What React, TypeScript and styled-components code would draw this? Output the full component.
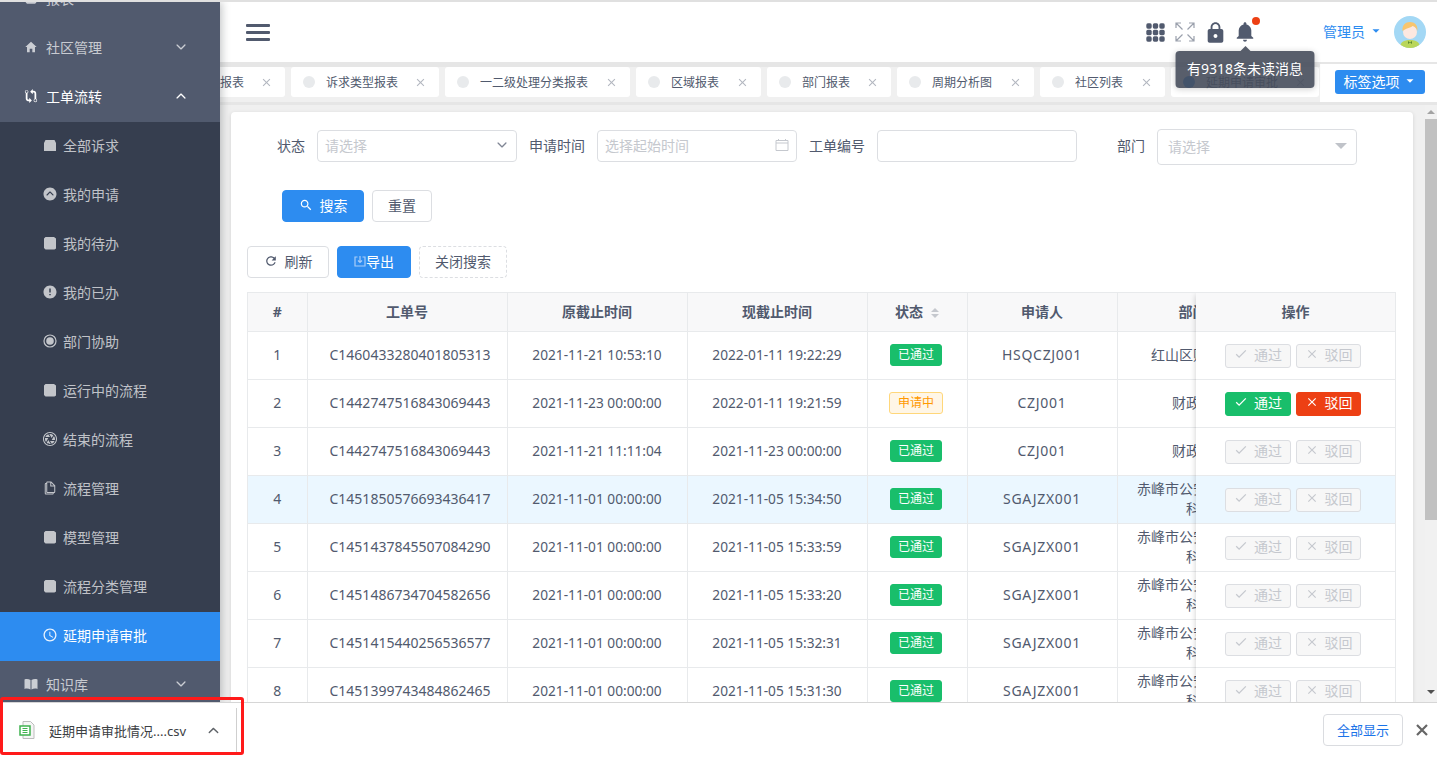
import styled, { createGlobalStyle } from 'styled-components';
import {
  IoMdHome, IoMdGitCompare, IoMdAlert, IoMdAperture, IoMdTime, IoMdCopy,
  IoMdLock, IoMdNotifications, IoMdCheckmark, IoMdClose, IoMdRefresh, IoMdSearch, IoMdArrowDropdown,
  IoIosArrowDown, IoIosArrowUp, IoIosArrowDropupCircle,
} from 'react-icons/io';
import type { ReactNode } from 'react';

const GlobalStyle = createGlobalStyle`
  * { box-sizing: border-box; }
  html, body { margin: 0; height: 100%; overflow: hidden; }
  body {
    font-family: "Noto Sans", "Noto Sans CJK SC", "Liberation Sans", sans-serif;
    font-size: 14px;
    color: #515a6e;
  }
`;

const Page = styled.div`
  position: relative;
  display: flex;
  flex-direction: column;
  width: 1437px;
  height: 757px;
  border-top: 2px solid #e0e0e0;
  overflow: hidden;
`;

const Main = styled.div`
  flex: 1;
  min-height: 0;
  display: flex;
`;

/* sidebar */
const Sidebar = styled.aside`
  width: 220px;
  flex-shrink: 0;
  background: #515a6e;
  overflow: hidden;
  z-index: 2;
  box-shadow: 2px 0 8px rgba(29, 35, 41, 0.25);
`;

const MenuList = styled.div`
  margin-top: -27px;
`;

const MenuItem = styled.div<{ $open?: boolean }>`
  height: 49px;
  display: flex;
  align-items: center;
  padding: 0 32px 3px 24px;
  gap: 8px;
  color: ${p => (p.$open ? '#fff' : 'rgba(255, 255, 255, 0.7)')};
  svg:first-child { width: 14px; height: 14px; flex-shrink: 0; }
  span { flex: 1; }
  svg:last-child { font-size: 14px; }
`;

const SubList = styled.div`
  background: #363e4f;
`;

const SubItem = styled.div<{ $active?: boolean }>`
  height: 49px;
  display: flex;
  align-items: center;
  padding: 0 0 3px 42px;
  gap: 5px;
  color: ${p => (p.$active ? '#fff' : 'rgba(255, 255, 255, 0.7)')};
  background: ${p => (p.$active ? '#2d8cf0' : 'transparent')};
  svg { width: 16px; height: 16px; flex-shrink: 0; }
`;

/* right side */
const Content = styled.div`
  flex: 1;
  min-width: 0;
  display: flex;
  flex-direction: column;
  background: #f0f0f0;
`;

const Header = styled.header`
  height: 60px;
  flex-shrink: 0;
  background: #fff;
  display: flex;
  align-items: center;
  padding: 0 11px 0 26px;
  position: relative;
  z-index: 1;
`;

const Burger = styled.div`
  width: 24px;
  height: 17px;
  display: flex;
  flex-direction: column;
  justify-content: space-between;
  i {
    display: block;
    height: 3px;
    border-radius: 1px;
    background: #515a6e;
  }
`;

const HeaderTools = styled.div`
  margin-left: auto;
  display: flex;
  align-items: center;
`;

const ToolIcon = styled.div`
  position: relative;
  width: 30px;
  height: 24px;
  display: flex;
  align-items: center;
  justify-content: center;
  color: #515a6e;
`;

const Dot = styled.i`
  position: absolute;
  top: -3px;
  right: 0;
  width: 8px;
  height: 8px;
  border-radius: 50%;
  background: #ed4014;
`;

const Tooltip = styled.div`
  position: absolute;
  top: 31px;
  left: 50%;
  transform: translateX(-50%);
  width: 139px;
  height: 37px;
  line-height: 35px;
  text-align: center;
  background: rgba(70, 76, 91, 0.9);
  color: #fff;
  font-size: 14px;
  border-radius: 4px;
  white-space: nowrap;
  z-index: 5;
  box-shadow: 0 1px 6px rgba(0, 0, 0, 0.2);
  &::before {
    content: '';
    position: absolute;
    top: -5px;
    left: 50%;
    margin-left: -5px;
    border: 5px solid transparent;
    border-top: 0;
    border-bottom-color: rgba(70, 76, 91, 0.9);
  }
`;

const UserName = styled.div`
  margin-left: 63px;
  padding-bottom: 2px;
  color: #2d8cf0;
  display: flex;
  align-items: center;
  gap: 4px;
  font-size: 14px;
  svg { font-size: 14px; }
`;

const Avatar = styled.div`
  margin-left: 11px;
  width: 32px;
  height: 32px;
  svg { display: block; }
`;

const TabsBar = styled.div`
  height: 43px;
  flex-shrink: 0;
  display: flex;
  background: #e6e6e6;
  padding-bottom: 3px;
`;

const TabsTrack = styled.div`
  flex: 1;
  min-width: 0;
  margin-top: 5px;
  background: #f0f0f0;
  display: flex;
  overflow: hidden;
`;

const Tab = styled.div<{ $w: number; $current?: boolean }>`
  width: ${p => p.$w}px;
  flex-shrink: 0;
  height: 30px;
  margin-right: 6px;
  background: #fff;
  border-radius: 3px;
  display: flex;
  align-items: center;
  padding: 0 12px;
  font-size: 12px;
  color: #515a6e;
  white-space: nowrap;
  overflow: hidden;
  b {
    width: 12px;
    height: 12px;
    border-radius: 50%;
    background: ${p => (p.$current ? '#2d8cf0' : '#e8eaec')};
    margin-right: 11px;
    flex-shrink: 0;
  }
  span { flex: 1; }
  svg { flex-shrink: 0; font-size: 13px; color: #b3b7c0; }
`;

const FirstTab = styled(Tab)`
  padding: 0 12px 0 0;
  border-radius: 0 3px 3px 0;
`;

const TabsOption = styled.div`
  width: 117px;
  flex-shrink: 0;
  margin-top: 2px;
  background: #fff;
  display: flex;
  align-items: flex-start;
  justify-content: flex-end;
  padding: 6px 12px 0 0;
`;

const OptionButton = styled.div`
  width: 90px;
  height: 24px;
  padding-bottom: 2px;
  border-radius: 3px;
  background: #2d8cf0;
  color: #fff;
  display: flex;
  align-items: center;
  justify-content: center;
  gap: 3px;
`;

const Body = styled.div`
  flex: 1;
  min-height: 0;
  display: flex;
  padding-left: 11px;
`;

const Card = styled.section`
  flex: 1;
  min-width: 0;
  margin-top: 7px;
  background: #fff;
  border-radius: 4px 4px 0 0;
  padding: 16px 17px 0 16px;
  overflow: hidden;
  box-shadow: 0 1px 4px rgba(0, 0, 0, 0.12);
`;

const Scrollbar = styled.div`
  width: 12px;
  flex-shrink: 0;
  margin-left: 12px;
  padding-bottom: 3px;
  background: #f1f1f1;
  display: flex;
  flex-direction: column;
`;

const ScrollArrow = styled.i<{ $up?: boolean }>`
  height: 14px;
  flex-shrink: 0;
  display: flex;
  align-items: center;
  justify-content: center;
  margin-top: ${p => (p.$up ? '0' : 'auto')};
  &::after {
    content: '';
    border: 4px solid transparent;
    ${p => (p.$up ? 'border-top: 0; border-bottom: 4px solid #a3a3a3;' : 'border-bottom: 0; border-top: 4px solid #505050;')}
  }
`;

const ScrollThumb = styled.div`
  height: 401px;
  background: #c1c1c1;
`;

const FilterRow = styled.div`
  display: flex;
  align-items: center;
  height: 36px;
`;

const Label = styled.label<{ $w: number }>`
  width: ${p => p.$w}px;
  padding: 0 12px 2px 0;
  text-align: right;
  font-size: 14px;
  flex-shrink: 0;
  white-space: nowrap;
`;

const Field = styled.div`
  width: 200px;
  height: 32px;
  border: 1px solid #dcdee2;
  border-radius: 4px;
  display: flex;
  align-items: center;
  justify-content: space-between;
  padding: 0 7px 2px 7px;
  flex-shrink: 0;
  color: #c5c8ce;
  svg { color: #808695; font-size: 14px; }
`;

const TallField = styled(Field)`
  height: 36px;
  margin-top: 2px;
  padding: 0 3px 2px 10px;
  svg { color: #c0c3c9; font-size: 24px; }
`;

const ButtonRow = styled.div<{ $top: number; $left: number }>`
  display: flex;
  gap: 8px;
  margin-top: ${p => p.$top}px;
  padding-left: ${p => p.$left}px;
`;

const Button = styled.div<{ $w: number; $primary?: boolean; $dashed?: boolean }>`
  width: ${p => p.$w}px;
  height: 32px;
  padding-bottom: 3px;
  border-radius: 4px;
  display: flex;
  align-items: center;
  justify-content: center;
  gap: 7px;
  font-size: 14px;
  background: ${p => (p.$primary ? '#2d8cf0' : '#fff')};
  color: ${p => (p.$primary ? '#fff' : '#515a6e')};
  border: 1px ${p => (p.$dashed ? 'dashed' : 'solid')} ${p => (p.$primary ? '#2d8cf0' : '#dcdee2')};
`;

const ExportGlyph = styled.svg`
  margin-right: -7px;
`;

const TableWrap = styled.div`
  position: relative;
  width: 1149px;
  margin-top: 14px;
  border: 1px solid #e8eaec;
  border-bottom: 0;
  overflow: hidden;
`;

const Table = styled.table`
  width: 1147px;
  border-collapse: collapse;
  table-layout: fixed;
  text-align: center;
  color: #515a6e;
  th, td {
    padding: 0 16px;
    border-bottom: 1px solid #e8eaec;
    border-right: 1px solid #e8eaec;
    font-size: 14px;
    line-height: 20px;
  }
  th {
    height: 38px;
    background: #f8f8f9;
    font-weight: 700;
    white-space: nowrap;
  }
  td { height: 48px; }
`;

const Row = styled.tr<{ $hover?: boolean }>`
  background: ${p => (p.$hover ? '#ebf7ff' : '#fff')};
`;

const OrderNo = styled.td`
  && { padding: 0 0 0 6px; }
  white-space: nowrap;
`;

const DateCell = styled.td`
  && { padding: 0; font-size: 13.7px; }
  white-space: nowrap;
`;

const Applicant = styled.td`
  && { padding: 0; }
  white-space: nowrap;
  letter-spacing: 0.7px;
`;

const Dept = styled.td`
  && { padding: 0 140px 0 14px; }
  word-break: break-all;
`;

const DeptHead = styled.th`
  && { padding: 0 127px 0 0; }
`;

const SortMark = styled.span`
  display: inline-flex;
  flex-direction: column;
  gap: 2px;
  margin-left: 8px;
  vertical-align: middle;
  i { display: block; border: 4px solid transparent; }
  i:first-child { border-top: 0; border-bottom: 4px solid #c5c8ce; }
  i:last-child { border-bottom: 0; border-top: 4px solid #c5c8ce; }
`;

const Tag = styled.span<{ $pending?: boolean }>`
  display: inline-block;
  width: ${p => (p.$pending ? 54 : 52)}px;
  height: 22px;
  line-height: 20px;
  margin-left: -2px;
  font-size: 12px;
  border-radius: 3px;
  vertical-align: middle;
  background: ${p => (p.$pending ? '#fff6e6' : '#19be6b')};
  border: 1px solid ${p => (p.$pending ? '#ffd77a' : '#19be6b')};
  color: ${p => (p.$pending ? '#ff9900' : '#fff')};
`;

const FixedCol = styled.div`
  position: absolute;
  top: 0;
  right: 0;
  width: 199px;
  background: #fff;
  box-shadow: -2px 0 6px -2px rgba(0, 0, 0, 0.2);
  z-index: 1;
`;

const FixedHead = styled.div`
  height: 39px;
  padding-bottom: 2px;
  background: #f8f8f9;
  border-bottom: 1px solid #e8eaec;
  display: flex;
  align-items: center;
  justify-content: center;
  font-weight: 700;
`;

const FixedCell = styled.div<{ $hover?: boolean }>`
  height: 48px;
  border-bottom: 1px solid #e8eaec;
  background: ${p => (p.$hover ? '#ebf7ff' : '#fff')};
  display: flex;
  align-items: center;
  gap: 5px;
  padding-left: 29px;
`;

const ActionBtn = styled.div<{ $w: number; $tone: 'ok' | 'no' | 'off' }>`
  width: ${p => p.$w}px;
  height: 24px;
  padding-bottom: 3px;
  border-radius: 3px;
  display: flex;
  align-items: center;
  justify-content: center;
  gap: 6px;
  font-size: 14px;
  background: ${p => (p.$tone === 'ok' ? '#19be6b' : p.$tone === 'no' ? '#ed4014' : '#f7f7f7')};
  color: ${p => (p.$tone === 'off' ? '#c5c8ce' : '#fff')};
  border: 1px solid ${p => (p.$tone === 'ok' ? '#19be6b' : p.$tone === 'no' ? '#ed4014' : '#dcdee2')};
  svg { font-size: 14px; }
`;

/* chrome download bar */
const DownloadBar = styled.footer`
  height: 55px;
  flex-shrink: 0;
  background: #fff;
  border-top: 1px solid #d6d6d6;
  display: flex;
  align-items: center;
  position: relative;
  z-index: 3;
  padding-right: 9px;
`;

const DownloadItem = styled.div`
  width: 237px;
  height: 44px;
  display: flex;
  align-items: center;
  padding-left: 19px;
  border-right: 1px solid #cfcfcf;
  font-size: 13px;
  color: #3c4043;
  span { margin-left: 14px; flex: 1; white-space: nowrap; }
  svg.up { margin-right: 15px; color: #5f6368; font-size: 15px; }
`;

const ShowAll = styled.div`
  margin-left: auto;
  width: 80px;
  height: 32px;
  padding-bottom: 2px;
  border: 1px solid #dadce0;
  border-radius: 4px;
  color: #1a73e8;
  font-size: 13px;
  display: flex;
  align-items: center;
  justify-content: center;
`;

const BarClose = styled.svg`
  margin-left: 13px;
`;

const Annotation = styled.div`
  position: absolute;
  left: 0;
  top: 695px;
  width: 244px;
  height: 58px;
  border: 3px solid #ff1a1a;
  border-radius: 3px;
  z-index: 6;
  pointer-events: none;
`;

function SquareGlyph() {
  return (
    <svg viewBox="-1 -1 16 16">
      <path d="M1 2.500 2.500 1H11l2 1.500V12.500L11.500 13.500H2.500L1 12Z" fill="currentColor" />
    </svg>
  );
}

function ArchiveGlyph() {
  return (
    <svg viewBox="-1 -1 16 16">
      <path d="M2.500 2h9L13 5v8H1V5Z" fill="currentColor" />
    </svg>
  );
}

function HelpGlyph() {
  return (
    <svg viewBox="-1 -1 16 16">
      <circle cx="7" cy="7" r="6" fill="none" stroke="currentColor" strokeWidth="1.2" />
      <circle cx="7" cy="7" r="3.800" fill="currentColor" />
    </svg>
  );
}

function BookGlyph() {
  return (
    <svg viewBox="0 0 14 14" fill="currentColor">
      <path d="M.5 2.500c2-.8 4.200-.6 6 .6v9.400c-1.800-1.100-4-1.300-6-.6ZM13.500 2.500c-2-.8-4.200-.6-6 .6v9.400c1.800-1.100 4-1.300 6-.6Z" />
    </svg>
  );
}

function CalendarGlyph() {
  return (
    <svg width="14" height="14" viewBox="0 0 14 14" fill="none" stroke="#c5c8ce">
      <path d="M1 2.500h12v10H1ZM1 5h12M3.500 1v2M10.500 1v2" />
    </svg>
  );
}

function GridIcon() {
  const cells = [3, 9.5, 16];
  return (
    <svg width="19" height="19" viewBox="0 0 19 19" fill="currentColor">
      {cells.flatMap(y => cells.map(x => <rect key={`${x}-${y}`} x={x - 2.7} y={y - 2.7} width="5.4" height="5.4" rx="1.6" />))}
    </svg>
  );
}

function ExpandIcon() {
  return (
    <svg width="20" height="20" viewBox="0 0 20 20" fill="none" stroke="#9aa0ac" strokeWidth="1.2">
      <path d="M1 6V1h5M1 1l6.500 6.500M14 1h5v5M19 1l-6.500 6.500M1 14v5h5M1 19l6.500-6.500M19 14v5h-5M19 19l-6.500-6.500" />
    </svg>
  );
}

function AvatarArt() {
  return (
    <svg width="32" height="32" viewBox="0 0 32 32">
      <defs>
        <clipPath id="avatar-clip"><circle cx="16" cy="16" r="16" /></clipPath>
      </defs>
      <g clipPath="url(#avatar-clip)">
        <rect width="32" height="32" fill="#a3d8f5" />
        <path d="M6 32c0-6 4-8 10-8s10 2 10 8Z" fill="#b9d65a" />
        <circle cx="16" cy="16" r="7" fill="#fde8e0" />
        <path d="M8.500 15c-.5-6 3-9 7.500-9s8 3 7.500 9c-1-3-3-4.500-5-5-2 2-7 2.500-10 5Z" fill="#f8c56d" />
        <path d="M14 25l2 1.500 2-1.500v3l-2-1.500-2 1.500Z" fill="#5d8a2e" />
      </g>
    </svg>
  );
}

function SheetIcon() {
  return (
    <svg width="16" height="18" viewBox="0 0 16 18">
      <path d="M4 .5h7.500L15 4v13.500H4Z" fill="#f5f5f5" stroke="#bdbdbd" />
      <rect x="1" y="5" width="10" height="9" fill="#fff" stroke="#3fb24f" strokeWidth="1.500" />
      <path d="M3.500 7.500h5M3.500 9.500h5M3.500 11.500h5" stroke="#3fb24f" />
    </svg>
  );
}

const tabs: [string, number][] = [
  ['诉求类型报表', 148],
  ['一二级处理分类报表', 185],
  ['区域报表', 125],
  ['部门报表', 124],
  ['周期分析图', 137],
  ['社区列表', 125],
];

const subMenu: [string, ReactNode][] = [
  ['全部诉求', <ArchiveGlyph key="a" />],
  ['我的申请', <IoIosArrowDropupCircle key="b" />],
  ['我的待办', <SquareGlyph key="c" />],
  ['我的已办', <IoMdAlert key="d" />],
  ['部门协助', <HelpGlyph key="e" />],
  ['运行中的流程', <SquareGlyph key="f" />],
  ['结束的流程', <IoMdAperture key="g" />],
  ['流程管理', <IoMdCopy key="h" />],
  ['模型管理', <SquareGlyph key="i" />],
  ['流程分类管理', <SquareGlyph key="j" />],
];

type OrderRow = {
  no: string;
  before: string;
  now: string;
  pending?: boolean;
  who: string;
  dept: string;
  hover?: boolean;
};

const police = '赤峰市公安局治安科';

const rows: OrderRow[] = [
  { no: 'C1460433280401805313', before: '2021-11-21 10:53:10', now: '2022-01-11 19:22:29', who: 'HSQCZJ001', dept: '红山区财政局' },
  { no: 'C1442747516843069443', before: '2021-11-23 00:00:00', now: '2022-01-11 19:21:59', pending: true, who: 'CZJ001', dept: '财政局' },
  { no: 'C1442747516843069443', before: '2021-11-21 11:11:04', now: '2021-11-23 00:00:00', who: 'CZJ001', dept: '财政局' },
  { no: 'C1451850576693436417', before: '2021-11-01 00:00:00', now: '2021-11-05 15:34:50', who: 'SGAJZX001', dept: police, hover: true },
  { no: 'C1451437845507084290', before: '2021-11-01 00:00:00', now: '2021-11-05 15:33:59', who: 'SGAJZX001', dept: police },
  { no: 'C1451486734704582656', before: '2021-11-01 00:00:00', now: '2021-11-05 15:33:20', who: 'SGAJZX001', dept: police },
  { no: 'C1451415440256536577', before: '2021-11-01 00:00:00', now: '2021-11-05 15:32:31', who: 'SGAJZX001', dept: police },
  { no: 'C1451399743484862465', before: '2021-11-01 00:00:00', now: '2021-11-05 15:31:30', who: 'SGAJZX001', dept: police },
];

export default function App() {
  return (
    <>
      <GlobalStyle />
      <Page>
        <Main>
          <Sidebar>
            <MenuList>
              <MenuItem><SquareGlyph /><span>报表</span><IoIosArrowDown /></MenuItem>
              <MenuItem><IoMdHome /><span>社区管理</span><IoIosArrowDown /></MenuItem>
              <MenuItem $open><IoMdGitCompare /><span>工单流转</span><IoIosArrowUp /></MenuItem>
              <SubList>
                {subMenu.map(([name, icon]) => (
                  <SubItem key={name}>{icon}{name}</SubItem>
                ))}
                <SubItem $active><IoMdTime />延期申请审批</SubItem>
              </SubList>
              <MenuItem><BookGlyph /><span>知识库</span><IoIosArrowDown /></MenuItem>
            </MenuList>
          </Sidebar>

          <Content>
            <Header>
              <Burger><i /><i /><i /></Burger>
              <HeaderTools>
                <ToolIcon><GridIcon /></ToolIcon>
                <ToolIcon><ExpandIcon /></ToolIcon>
                <ToolIcon><IoMdLock size={25} /></ToolIcon>
                <ToolIcon>
                  <IoMdNotifications size={24} />
                  <Dot />
                  <Tooltip>有9318条未读消息</Tooltip>
                </ToolIcon>
                <UserName>管理员<IoMdArrowDropdown /></UserName>
                <Avatar><AvatarArt /></Avatar>
              </HeaderTools>
            </Header>

            <TabsBar>
              <TabsTrack>
                <FirstTab $w={65}>
                  <span>报表</span><IoMdClose />
                </FirstTab>
                {tabs.map(([name, width]) => (
                  <Tab key={name} $w={width}><b /><span>{name}</span><IoMdClose /></Tab>
                ))}
                <Tab $w={148} $current><b /><span>延期申请审批</span><IoMdClose /></Tab>
              </TabsTrack>
              <TabsOption>
                <OptionButton>标签选项<IoMdArrowDropdown /></OptionButton>
              </TabsOption>
            </TabsBar>

            <Body>
              <Card>
                <FilterRow>
                  <Label $w={70}>状态</Label>
                  <Field>请选择<IoIosArrowDown /></Field>
                  <Label $w={80}>申请时间</Label>
                  <Field>选择起始时间<CalendarGlyph /></Field>
                  <Label $w={80}>工单编号</Label>
                  <Field />
                  <Label $w={80}>部门</Label>
                  <TallField>请选择<IoMdArrowDropdown /></TallField>
                </FilterRow>

                <ButtonRow $top={26} $left={35}>
                  <Button $w={82} $primary><IoMdSearch />搜索</Button>
                  <Button $w={60}>重置</Button>
                </ButtonRow>

                <ButtonRow $top={24} $left={0}>
                  <Button $w={82}><IoMdRefresh />刷新</Button>
                  <Button $w={74} $primary>
                    <ExportGlyph width="12" height="12" viewBox="0 0 12 12" fill="none" stroke="#a9cdf8" strokeWidth="1.2">
                      <path d="M3.500 2H1v9h10V2H8.500M6 1v6M4 5.500 6 7.500 8 5.500" />
                    </ExportGlyph>
                    导出
                  </Button>
                  <Button $w={88} $dashed>关闭搜索</Button>
                </ButtonRow>

                <TableWrap>
                  <Table>
                    <colgroup>
                      <col width="59" /><col width="200" /><col width="180" /><col width="180" />
                      <col width="100" /><col width="150" /><col width="278" />
                    </colgroup>
                    <thead>
                      <tr>
                        <th>#</th><th>工单号</th><th>原截止时间</th><th>现截止时间</th>
                        <th>状态<SortMark><i /><i /></SortMark></th><th>申请人</th>
                        <DeptHead>部门</DeptHead>
                      </tr>
                    </thead>
                    <tbody>
                      {rows.map((row, i) => (
                        <Row key={i} $hover={row.hover}>
                          <td>{i + 1}</td>
                          <OrderNo>{row.no}</OrderNo>
                          <DateCell>{row.before}</DateCell>
                          <DateCell>{row.now}</DateCell>
                          <td><Tag $pending={row.pending}>{row.pending ? '申请中' : '已通过'}</Tag></td>
                          <Applicant>{row.who}</Applicant>
                          <Dept>{row.dept}</Dept>
                        </Row>
                      ))}
                    </tbody>
                  </Table>
                  <FixedCol>
                    <FixedHead>操作</FixedHead>
                    {rows.map((row, i) => (
                      <FixedCell key={i} $hover={row.hover}>
                        <ActionBtn $w={66} $tone={row.pending ? 'ok' : 'off'}><IoMdCheckmark />通过</ActionBtn>
                        <ActionBtn $w={65} $tone={row.pending ? 'no' : 'off'}><IoMdClose />驳回</ActionBtn>
                      </FixedCell>
                    ))}
                  </FixedCol>
                </TableWrap>
              </Card>
              <Scrollbar>
                <ScrollArrow $up />
                <ScrollThumb />
                <ScrollArrow />
              </Scrollbar>
            </Body>
          </Content>
        </Main>

        <DownloadBar>
          <DownloadItem>
            <SheetIcon />
            <span>延期申请审批情况....csv</span>
            <IoIosArrowUp className="up" />
          </DownloadItem>
          <ShowAll>全部显示</ShowAll>
          <BarClose width="12" height="12" viewBox="0 0 12 12" stroke="#666" strokeWidth="2.2">
            <path d="M1 1l10 10M11 1 1 11" />
          </BarClose>
        </DownloadBar>
        <Annotation />
      </Page>
    </>
  );
}
